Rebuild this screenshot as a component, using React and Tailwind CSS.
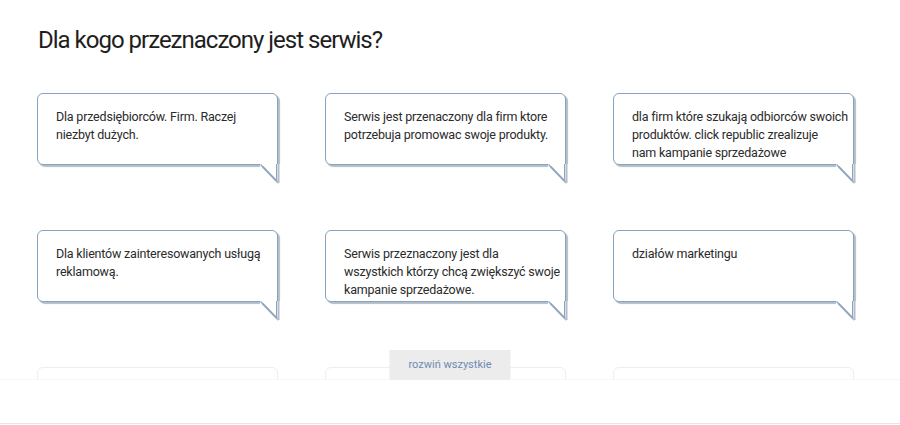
import React from "react"

// each entry is the list of lines as they break in the design
const cards = [
  ["Dla przedsiębiorców. Firm. Raczej", "niezbyt dużych."],
  ["Serwis jest przenaczony dla firm ktore", "potrzebuja promowac swoje produkty."],
  ["dla firm które szukają odbiorców swoich", "produktów. click republic zrealizuje", "nam kampanie sprzedażowe"],
  ["Dla klientów zainteresowanych usługą", "reklamową."],
  ["Serwis przeznaczony jest dla", "wszystkich którzy chcą zwiększyć swoje", "kampanie sprzedażowe."],
  ["działów marketingu"],
]

function Tail() {
  return (
    <svg
      className="absolute right-[-4px] top-full"
      width="22"
      height="22"
      viewBox="0 0 22 22"
    >
      <rect x="1" y="0" width="21" height="4" fill="#fff" />
      <polygon points="1,0 17.5,0 17.5,17" fill="#fff" />
      <line x1="3.5" y1="2.5" x2="19.5" y2="19" stroke="#b4bcc6" strokeWidth="2" />
      <line x1="19.5" y1="0" x2="19.5" y2="19" stroke="#b4bcc6" strokeWidth="2" />
      <line x1="1.5" y1="0.5" x2="17.5" y2="17" stroke="#86a3c3" strokeWidth="1.2" />
      <line x1="17.5" y1="0" x2="17.5" y2="17" stroke="#86a3c3" strokeWidth="1" />
    </svg>
  )
}

function Bubble({ lines }) {
  return (
    <div className="relative h-[72px] rounded-md rounded-br-none border border-[#86a3c3] bg-white pl-[18px] pr-1 pt-[14px] shadow-[2px_2px_1px_#b4bcc6]">
      <p className="whitespace-nowrap text-[12.5px] leading-[18px] tracking-[-0.2px] text-[#2b2b2b]">
        {lines.map((l, i) => (
          <span key={i} className="block">
            {l}
          </span>
        ))}
      </p>
      <Tail />
    </div>
  )
}

export default function App() {
  return (
    <div className="min-h-[425px] bg-white font-['Roboto',sans-serif]">
      <h1 className="pl-[38px] pt-[22px] text-[24px] leading-[36px] tracking-[-1px] text-[#1e1e1e]">
        Dla kogo przeznaczony jest serwis?
      </h1>

      <div className="relative mt-[35px]">
        <div className="h-[287px] overflow-hidden border-b border-[#f7f7f7] pl-[37px]">
          <div className="grid w-[817px] grid-cols-[241px_241px_241px] gap-x-[47px] gap-y-[65px]">
            {cards.map((c, i) => (
              <Bubble key={i} lines={c} />
            ))}
            <div className="h-[72px] rounded-md border border-[#eeeeee]" />
            <div className="h-[72px] rounded-md border border-[#eeeeee]" />
            <div className="h-[72px] rounded-md border border-[#eeeeee]" />
          </div>
        </div>
        <button className="absolute bottom-0 left-1/2 h-[30px] w-[121px] -translate-x-1/2 bg-[#ececec] text-[11px] text-[#6d8bb3]">
          rozwiń wszystkie
        </button>
      </div>

      <div className="mt-[43px] border-t border-[#e6e6e6]" />
    </div>
  )
}
